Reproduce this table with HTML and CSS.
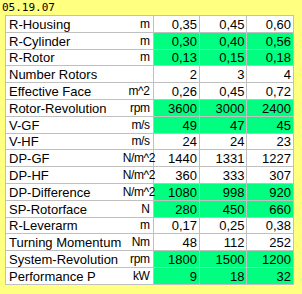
FILE: index.html
```html
<!DOCTYPE html>
<html>
<head>
<meta charset="utf-8">
<link rel="stylesheet" href="styles.css">
</head>
<body>
<div class="date">05.19.07</div>
<table class="grid">
<colgroup><col class="c-label"><col class="c-unit"><col class="c-val"><col class="c-val2"><col class="c-val"></colgroup>
<tr><td class="lbl">R-Housing</td><td class="unit">m</td><td>0,35</td><td>0,45</td><td>0,60</td></tr>
<tr class="hi"><td class="lbl">R-Cylinder</td><td class="unit">m</td><td>0,30</td><td>0,40</td><td>0,56</td></tr>
<tr class="hi"><td class="lbl">R-Rotor</td><td class="unit">m</td><td>0,13</td><td>0,15</td><td>0,18</td></tr>
<tr><td class="lbl">Number Rotors</td><td class="unit"></td><td>2</td><td>3</td><td>4</td></tr>
<tr><td class="lbl">Effective Face</td><td class="unit">m^2</td><td>0,26</td><td>0,45</td><td>0,72</td></tr>
<tr class="hi"><td class="lbl">Rotor-Revolution</td><td class="unit">rpm</td><td>3600</td><td>3000</td><td>2400</td></tr>
<tr class="hi"><td class="lbl">V-GF</td><td class="unit">m/s</td><td>49</td><td>47</td><td>45</td></tr>
<tr><td class="lbl">V-HF</td><td class="unit">m/s</td><td>24</td><td>24</td><td>23</td></tr>
<tr><td class="lbl">DP-GF</td><td class="unit">N/m^2</td><td>1440</td><td>1331</td><td>1227</td></tr>
<tr><td class="lbl">DP-HF</td><td class="unit">N/m^2</td><td>360</td><td>333</td><td>307</td></tr>
<tr class="hi"><td class="lbl">DP-Difference</td><td class="unit">N/m^2</td><td>1080</td><td>998</td><td>920</td></tr>
<tr class="hi"><td class="lbl">SP-Rotorface</td><td class="unit">N</td><td>280</td><td>450</td><td>660</td></tr>
<tr><td class="lbl">R-Leverarm</td><td class="unit">m</td><td>0,17</td><td>0,25</td><td>0,38</td></tr>
<tr><td class="lbl">Turning Momentum</td><td class="unit">Nm</td><td>48</td><td>112</td><td>252</td></tr>
<tr class="hi"><td class="lbl">System-Revolution</td><td class="unit">rpm</td><td>1800</td><td>1500</td><td>1200</td></tr>
<tr class="hi"><td class="lbl">Performance P</td><td class="unit">kW</td><td>9</td><td>18</td><td>32</td></tr>
</table>
</body>
</html>
```
FILE: styles.css
```css
html, body {
  margin: 0;
  padding: 0;
  background: #ffff80;
  width: 302px;
  height: 294px;
  overflow: hidden;
}
.date {
  height: 15px;
  padding-left: 2px;
  font-family: "DejaVu Sans Mono", monospace;
  font-size: 11px;
  line-height: 16px;
  color: #000;
}
.grid {
  margin-left: 5px;
  border-collapse: collapse;
  table-layout: fixed;
  width: 289px;
  font-family: "Liberation Sans", Arial, sans-serif;
  font-size: 13px;
  color: #000;
}
.c-label { width: 116px; }
.c-unit { width: 30px; }
.c-val { width: 46px; }
.c-val2 { width: 47px; }
.grid td {
  height: 15.8px;
  padding: 0 2px 0 3px;
  border: 1px solid #c0c0c0;
  background: #fff;
  text-align: right;
  white-space: nowrap;
  overflow: hidden;
  line-height: 15px;
  vertical-align: bottom;
}
.grid td.lbl {
  text-align: left;
  border-right: none;
  padding-right: 0;
}
.grid td.unit {
  border-left: none;
  padding-left: 0;
  padding-right: 3px;
  overflow: visible;
  font-size: 12px;
  letter-spacing: -0.4px;
}
.grid tr.hi td {
  background: #00ff80;
}
.grid tr.hi td.lbl, .grid tr.hi td.unit {
  background: #fff;
}
```
